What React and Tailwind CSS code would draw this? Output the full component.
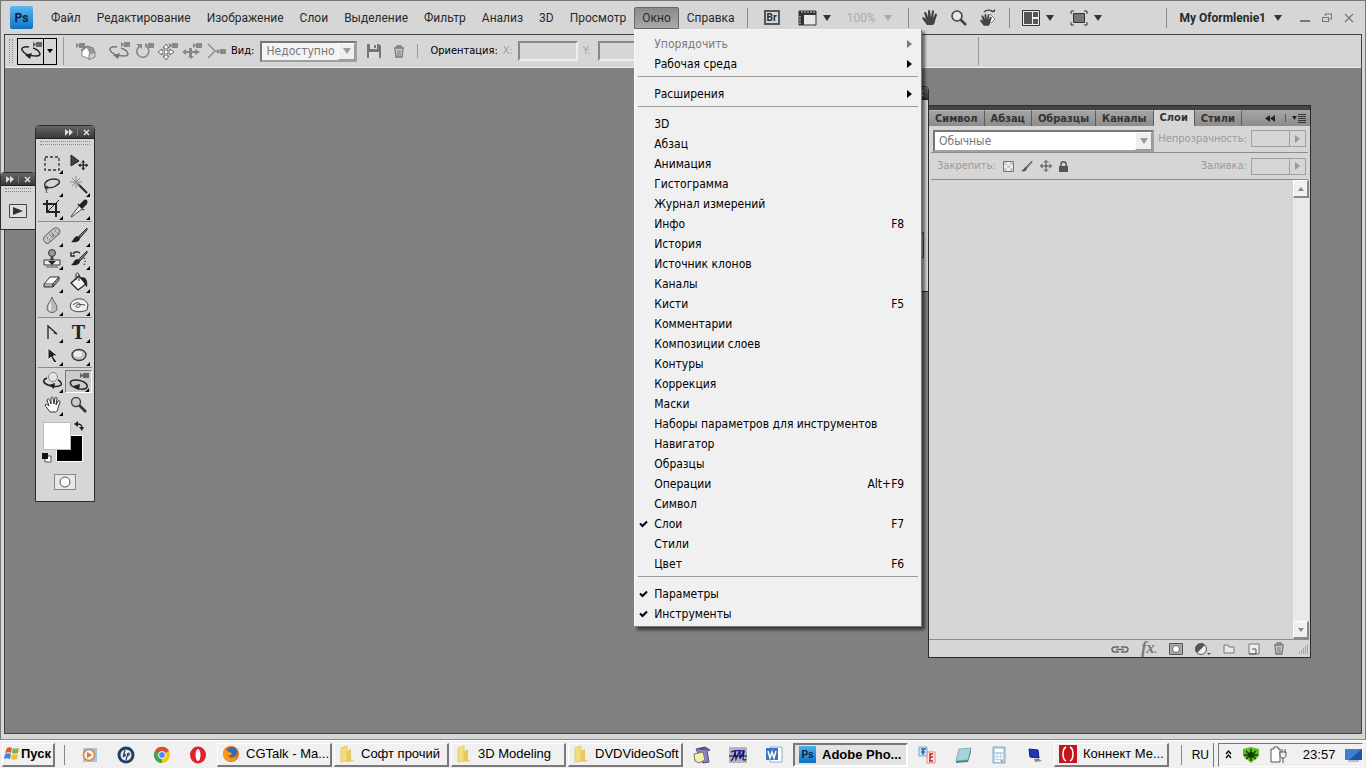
import { useState } from 'react';

const MENUS = ['Файл', 'Редактирование', 'Изображение', 'Слои', 'Выделение', 'Фильтр', 'Анализ', '3D', 'Просмотр', 'Окно', 'Справка'];

const WINDOW_MENU = [
  [
    { label: 'Упорядочить', sub: true, disabled: true },
    { label: 'Рабочая среда', sub: true },
  ],
  [{ label: 'Расширения', sub: true }],
  [
    { label: '3D' },
    { label: 'Абзац' },
    { label: 'Анимация' },
    { label: 'Гистограмма' },
    { label: 'Журнал измерений' },
    { label: 'Инфо', keys: 'F8' },
    { label: 'История' },
    { label: 'Источник клонов' },
    { label: 'Каналы' },
    { label: 'Кисти', keys: 'F5' },
    { label: 'Комментарии' },
    { label: 'Композиции слоев' },
    { label: 'Контуры' },
    { label: 'Коррекция' },
    { label: 'Маски' },
    { label: 'Наборы параметров для инструментов' },
    { label: 'Навигатор' },
    { label: 'Образцы' },
    { label: 'Операции', keys: 'Alt+F9' },
    { label: 'Символ' },
    { label: 'Слои', keys: 'F7' },
    { label: 'Стили' },
    { label: 'Цвет', keys: 'F6' },
  ],
  [{ label: 'Параметры' }, { label: 'Инструменты' }],
];

const PANEL_TABS = ['Символ', 'Абзац', 'Образцы', 'Каналы', 'Слои', 'Стили'];

// --- Small shared pieces ---

const Icon = ({ w = 20, h = 20, children }) => (
  <svg width={w} height={h} viewBox={`0 0 ${w} ${h}`} fill="none" className="shrink-0" aria-hidden="true">
    {children}
  </svg>
);

const Down = ({ color = '#333' }) => (
  <Icon w={8} h={6}><path d="M0 0h8L4 6z" fill={color} /></Icon>
);

const Divider = () => <span className="h-5 w-px bg-[#8c8c8c] shrink-0" />;

const Grip = () => <div className="h-1 mx-1 border-y border-dotted border-[#888]" />;

const Camera = ({ x = 0, y = 0, fill = '#777' }) => (
  <g transform={`translate(${x} ${y})`} fill={fill}>
    <rect x="3" y="0" width="6" height="5" />
    <path d="M0 0l3 2v1L0 5z" />
  </g>
);

const OrbitIcon = ({ color = '#222' }) => (
  <Icon w={22} h={18}>
    <path d="M9 5C4 4 1 6 2 8c2 4 8 6 14 6 4 0 5-2 3-4-1-2-3-3-6-4" stroke={color} strokeWidth="1.5" />
    <path d="M12 11l-2 6-5-4z" fill={color} />
    <Camera x={13} y={0} fill={color === '#222' ? '#666' : '#888'} />
  </Icon>
);

const HandShape = ({ fill, stroke }) => (
  <path
    d="M6 16C4 13 2 11 1 9c1-1 2-1 4 1L3 4c1-2 2-1 3 1l1 3V2c1-2 2-1 2 0l1 6 1-6c1-1 2-1 2 1l-1 6 2-4c1-1 2 0 2 1l-2 6c0 2-1 3-2 4z"
    fill={fill}
    stroke={stroke}
    strokeWidth="1"
  />
);

const Move4 = ({ fill = '#888', stroke = 'none' }) => (
  <path d="M8 0l3 4H9v3h3V5l4 3-4 3V9H9v3h2l-3 4-3-4h2V9H4v2L0 8l4-3v2h3V4H5z" fill={fill} stroke={stroke} />
);

const TrashIcon = () => (
  <Icon w={12} h={13}><path d="M1 3h10M4 3V1h4v2M2 4l1 8h6l1-8" fill="#ccc" stroke="#777" strokeWidth="1.3" /><path d="M5 5v6M7 5v6" stroke="#777" /></Icon>
);

// --- Tool icons ---

const TOOLS = [
  [
    ['Прямоугольная область', <path d="M3 4h14v13H3z" stroke="#333" strokeWidth="1.3" strokeDasharray="3 2" />],
    ['Перемещение', <><path d="M2 2v11l8-5z" fill="#444" stroke="#222" /><g transform="translate(9 7) scale(.65)"><Move4 fill="#222" /></g></>, true],
    ['Лассо', <><path d="M4 12C0 7 6 3 12 3c6 0 7 4 3 6-3 3-8 3-11 2" stroke="#333" strokeWidth="1.4" /><path d="M4 10c-2 1-1 3 1 3s1-3-1-3c0 3 0 5 1 7" stroke="#333" /></>],
    ['Волшебная палочка', <><path d="M9 8l9 9" stroke="#222" strokeWidth="2" /><path d="M7 0v12M1 6h12M3 2l8 8M11 2l-8 8" stroke="#888" /></>],
    ['Рамка', <><path d="M5 1v12h13M1 5h13v13" stroke="#222" strokeWidth="2" /><path d="M17 1L6 12" stroke="#222" /></>],
    ['Пипетка', <><path d="M10 7L3 16l-1 2 2-1 9-7" fill="#eee" stroke="#444" /><path d="M9 5l6 6M11 6l4-4c2-2 4 0 2 3l-4 4z" fill="#222" stroke="#222" strokeWidth="1.5" /></>],
  ],
  [
    ['Восстанавливающая кисть', <><path d="M3 16c-2-2-2-4 0-6l8-7c4-3 9 1 6 5l-9 8c-2 2-4 2-5 0z" fill="#c4c4c4" stroke="#555" /><path d="M7 8l5 5M9 6l5 5" stroke="#888" /><path d="M5 12h1M7 14h1M13 5h1M15 7h1M10 9h1M11 10h1" stroke="#444" /></>],
    ['Кисть', <><path d="M18 2l-8 8 1 2 7-8z" fill="#777" stroke="#333" /><path d="M9 10c-4 0-4 4-7 6 4 1 9 0 9-4z" fill="#222" /></>],
    ['Штамп', <><circle cx="10" cy="4" r="3.5" fill="#999" stroke="#333" /><path d="M9 7h2l1 5H8z" fill="#444" /><path d="M2 11h16v5H2z" fill="#eee" stroke="#333" /><path d="M6 12h8l-4 4z" fill="#222" /><path d="M4 18h12" stroke="#555" /></>],
    ['Архивная кисть', <><path d="M18 2l-8 8 1 2 7-8z" fill="#777" stroke="#333" /><path d="M9 10c-4 0-4 4-7 6 4 1 9 0 9-4z" fill="#222" /><path d="M11 4C8 2 5 3 4 5M2 3v4h4" stroke="#222" strokeWidth="1.4" /><path d="M15 9c2 3 1 6-1 8" stroke="#222" strokeDasharray="1 2" strokeWidth="1.5" /></>],
    ['Ластик', <><path d="M2 12l6-7h9l-6 7z" fill="#f8f8f8" stroke="#333" /><path d="M2 12v3h9v-3M11 15l6-7V5l-6 7z" fill="#aaa" stroke="#333" /></>],
    ['Заливка', <><path d="M2 11l8-7 7 8-8 6z" fill="#f2f2f2" stroke="#222" strokeWidth="1.3" /><path d="M7 8V2c1-2 3-1 3 1v6" stroke="#333" /><path d="M12 5c5 0 7 3 6 10-2-1-2-4-4-6z" fill="#222" /></>],
    ['Размытие', <><path d="M10 2c-1 4-5 7-5 11 0 6 10 6 10 0 0-4-4-7-5-11z" fill="#bbb" stroke="#666" /><path d="M9 7c-3 4-3 8 0 9z" fill="#eee" /></>],
    ['Осветлитель', <><path d="M2 14C0 9 3 5 8 4c6-1 10 2 11 6l-1 5c-4 2-12 3-16-1z" fill="#eee" stroke="#444" /><path d="M4 10c4-4 8-2 7 1-1 2-4 2-4 0 1-2 3-2 9-1" stroke="#444" /></>],
  ],
  [
    ['Перо', <path d="M6 17V4l9 8-3-1" stroke="#222" strokeWidth="1.3" />],
    ['Текст', null],
    ['Выделение контура', <path d="M6 3v12l3-3 3 6 3-1-4-6h5z" fill="#222" stroke="#eee" />],
    ['Эллипс', <><ellipse cx="10" cy="10" rx="7" ry="5.5" fill="#c4c4c4" stroke="#333" strokeWidth="1.3" /><ellipse cx="9" cy="9" rx="4" ry="3" fill="#eee" /></>],
  ],
  [
    ['Поворот 3D-объекта', <><path d="M5 6C0 8 1 11 6 13c5 2 11 2 13 0 1-2-1-4-3-5" stroke="#222" strokeWidth="1.5" /><path d="M13 11l-1 6-5-4z" fill="#222" /><circle cx="11" cy="5" r="4.5" fill="#e4e4e4" stroke="#888" /></>],
    ['Вращение 3D-камеры', <><path d="M7 8C1 8 0 11 3 14c5 4 14 4 15 1 1-3-4-7-11-7" stroke="#222" strokeWidth="1.5" /><path d="M11 12l-1 6-6-4z" fill="#222" /><Camera x={11} y={1} fill="#666" /></>],
    ['Рука', <g transform="translate(2 1)"><HandShape fill="#fff" stroke="#333" /></g>],
    ['Масштаб', <><path d="M10 10l7 7" stroke="#333" strokeWidth="2.6" /><circle cx="7" cy="7" r="4.5" fill="#ccc" stroke="#444" strokeWidth="1.4" /></>, true],
  ],
];

const PanelTitle = () => (
  <div className="h-[13px] px-1 flex items-center justify-end gap-1 bg-linear-to-b from-[#666] to-[#3a3a3a] border-b border-[#222]">
    <Icon w={8} h={7}><path d="M0 0l4 3-4 4zM4 0l4 3-4 4z" fill="#ddd" /></Icon>
    <span className="h-2 w-px bg-[#777]" />
    <button type="button" aria-label="Закрыть" className="ml-px">
      <Icon w={7} h={7}><path d="M1 1l5 5M6 1L1 6" stroke="#ddd" strokeWidth="1.5" /></Icon>
    </button>
  </div>
);

const ToolsPanel = () => (
  <div className="absolute left-[30px] top-[57px] w-[60px] rounded-t-sm overflow-hidden border border-[#2b2b2b] bg-[#d6d6d6]">
    <PanelTitle />
    <div className="pt-0.5"><Grip /></div>
    <div className="pt-1.5 px-0.5">
      {TOOLS.map((group, i) => (
        <div key={i} className="grid grid-cols-2 pb-px mb-0.5 border-b border-[#8c8c8c] last:border-transparent">
          {group.map(([name, art, single]) => (
            <button
              key={name}
              type="button"
              title={name}
              className={`relative h-[23px] flex items-center justify-center ${name === 'Вращение 3D-камеры' ? 'bg-[#cccccc] border border-t-[#777] border-l-[#777] border-r-white border-b-white' : ''}`}
            >
              {art ? <Icon>{art}</Icon> : <span className="font-['Liberation_Serif',serif] font-bold text-xl leading-5 text-[#222]">T</span>}
              {!single && <span className="absolute right-0.5 bottom-0 border-2 border-transparent border-r-black border-b-black" />}
            </button>
          ))}
        </div>
      ))}
    </div>
    {/* foreground / background colours */}
    <div className="relative h-[42px] mx-1.5 mt-[3px]">
      <span className="absolute left-3.5 top-3.5 w-[27px] h-[27px] bg-black border border-white" />
      <span className="absolute left-px top-px w-7 h-7 bg-white border border-[#bbb]" />
      <span className="absolute left-8 top-0">
        <Icon w={10} h={10}><path d="M3 3c4 0 5 1 5 5" stroke="#222" strokeWidth="1.3" /><path d="M0 3l4-3v6zM8 10L5 6h5z" fill="#222" /></Icon>
      </span>
      <span className="absolute left-0 top-8">
        <Icon w={10} h={10}><path d="M3 3h6v6H3z" fill="#fff" stroke="#555" /><path d="M0 0h6v6H0z" fill="#111" /></Icon>
      </span>
    </div>
    <button type="button" title="Быстрая маска" className="mx-auto my-[11px] w-[22px] h-4 flex items-center justify-center bg-[#e8e8e8] border border-[#888]">
      <Icon w={12} h={12}><circle cx="6" cy="6" r="5" stroke="#555" fill="#fff" /></Icon>
    </button>
  </div>
);

const ActionsPanel = () => (
  <div className="absolute -left-[5px] top-[104px] w-9 h-[58px] rounded-t-sm overflow-hidden border border-[#2b2b2b] bg-[#d6d6d6]">
    <PanelTitle />
    <div className="pt-0.5"><Grip /></div>
    <button type="button" title="Воспроизвести" className="mx-auto mt-3 block">
      <Icon w={18} h={14}><path d="M.5.5h17v13H.5z" fill="#ddd" stroke="#444" /><path d="M4 3v8l10-4z" fill="#333" /></Icon>
    </button>
  </div>
);

const PercentField = ({ id, label }) => (
  <div className="ml-auto flex items-center gap-1 text-[11px] leading-4 text-[#9a9a9a]">
    <label htmlFor={id}>{label}</label>
    <div className="flex h-[17px] w-[55px] mr-0.5 border border-[#a0a0a0]">
      <input id={id} disabled className="w-0 flex-1" />
      <span className="w-4 border-l border-[#a0a0a0] flex items-center justify-center">
        <Icon w={5} h={8}><path d="M0 0l5 4-5 4z" fill="#999" /></Icon>
      </span>
    </div>
  </div>
);

const ScrollButton = ({ up }) => (
  <button type="button" aria-label={up ? 'Вверх' : 'Вниз'} className="h-[18px] flex items-center justify-center bg-[#f0f0f0] border border-white border-r-2 border-b-2 border-r-[#888] border-b-[#888]">
    <Icon w={6} h={4}><path d={up ? 'M0 4l3-4 3 4z' : 'M0 0h6L3 4z'} fill="#888" /></Icon>
  </button>
);

const LayersPanel = () => (
  <div className="absolute right-[50px] top-[37px] bottom-[75px] w-[383px] flex flex-col border border-[#2b2b2b] bg-[#d6d6d6]">
    <div className="h-1 bg-[#444]" />
    <div className="h-4 flex bg-linear-to-b from-[#a6a6a6] to-[#8c8c8c] text-[11px] font-bold text-[#333]">
      {PANEL_TABS.map((tab) => (
        <button
          key={tab}
          type="button"
          className={`px-1.5 leading-4 border-r border-[#5c5c5c] ${tab === 'Слои' ? 'bg-[#d6d6d6]' : 'border-t border-t-[#b5b5b5]'}`}
        >
          {tab}
        </button>
      ))}
      <div className="ml-auto pr-1 flex items-center gap-1.5">
        <Icon w={10} h={7}><path d="M5 0L0 3.5l5 3.5zM10 0L5 3.5l5 3.5z" fill="#222" /></Icon>
        <span className="h-2 w-px ml-1 bg-[#555]" />
        <Icon w={14} h={9}><path d="M0 2h5L2.5 6z" fill="#222" /><path d="M6 .5h8M6 2.5h8M6 4.5h8M6 6.5h8M6 8.5h8" stroke="#333" /></Icon>
      </div>
    </div>
    <div className="h-[27px] mx-0.5 pt-1 flex items-start gap-1 border-b border-[#8c8c8c]">
      <div className="relative w-[222px] ml-0.5">
        <select aria-label="Режим наложения" disabled className="block w-full h-[22px] pl-1 appearance-none text-xs text-[#777] bg-white border-2 border-[#a0a0a0] border-t-[#777] border-l-[#777] opacity-100">
          <option>Обычные</option>
        </select>
        <span className="absolute right-0.5 top-0.5 w-[17px] h-[18px] flex items-center justify-center bg-[#efefef] border border-white border-r-[#999] border-b-[#999] pointer-events-none"><Down color="#999" /></span>
      </div>
      <PercentField id="opacity" label="Непрозрачность:" />
    </div>
    <div className="h-[27px] mx-0.5 pl-1.5 flex items-center gap-[7px] border-b border-[#8c8c8c]">
      <span className="text-[11px] text-[#9a9a9a]">Закрепить:</span>
      <Icon w={11} h={11}><path d="M.5.5h10v10H.5z" fill="#eee" stroke="#777" /><path d="M1 1h3v3H1zM7 1h3v3H7zM4 4h3v3H4zM1 7h3v3H1zM7 7h3v3H7z" fill="#ccc" /></Icon>
      <Icon w={12} h={12}><path d="M11 1L5 7l1 1 5-6z" fill="#999" stroke="#666" /><path d="M5 7c-2 0-2 3-5 4 3 1 6 0 6-3z" fill="#555" /></Icon>
      <Icon w={12} h={12}><path d="M6 1v10M1 6h10M4 2.5L6 .5l2 2M4 9.5l2 2 2-2M2.5 4l-2 2 2 2M9.5 4l2 2-2 2" stroke="#444" /></Icon>
      <Icon w={9} h={11}><path d="M2 6V3c0-3 5-3 5 0v3" stroke="#555" strokeWidth="1.5" /><path d="M0 5h9v6H0z" fill="#555" /></Icon>
      <PercentField id="fill" label="Заливка:" />
    </div>
    <div className="flex-1 flex justify-end mr-px border-b border-[#8c8c8c]">
      <div className="w-4 flex flex-col justify-between bg-[#e9e9e9]">
        <ScrollButton up />
        <ScrollButton />
      </div>
    </div>
    <div className="h-[17px] flex items-center justify-end gap-3 pr-px">
      <Icon w={18} h={10}><path d="M8 3H4C0 3 0 8 4 8h4M10 3h4c4 0 4 5 0 5h-4M5 5.5h8" stroke="#666" strokeWidth="1.5" /></Icon>
      <span className="font-['Liberation_Serif',serif] italic font-bold text-base leading-4 text-[#777]">fx<span className="text-[10px]">.</span></span>
      <Icon w={14} h={12}><path d="M.5.5h13v11H.5z" fill="#aaa" stroke="#555" /><circle cx="7" cy="6" r="3.5" fill="#fff" stroke="#666" /></Icon>
      <Icon w={16} h={12}><circle cx="6" cy="6" r="5.5" fill="#eee" stroke="#555" /><path d="M2 10A5.5 5.5 0 0 1 10 2z" fill="#555" /><path d="M12 10h4l-2 2z" fill="#555" /></Icon>
      <Icon w={12} h={10}><path d="M1 1h4l1 2h5v6H1z" fill="#e8e8e8" stroke="#777" /></Icon>
      <Icon w={14} h={12}><path d="M2 1h10v10H2z" fill="#eee" stroke="#777" /><path d="M5 6h4v5H2" stroke="#555" /></Icon>
      <TrashIcon />
      <Icon w={12} h={12}><path d="M10 2h1M8 4h3M6 6h5M4 8h7M2 10h9" stroke="#777" strokeDasharray="1 1" /></Icon>
    </div>
  </div>
);

// --- Window menu ---

const WindowMenu = ({ checked, onToggle }) => (
  <div role="menu" className="absolute left-0 top-full z-20 w-[288px] pt-1 pb-0.5 px-[3px] bg-[#f0f0f0] border border-[#f8f8f8] border-r-[#777] border-b-[#777] shadow-[3px_3px_3px_rgba(0,0,0,0.55)] text-xs font-['DejaVu_Sans_Condensed','DejaVu_Sans',sans-serif]">
    {WINDOW_MENU.map((group, i) => (
      <div key={i}>
        {i > 0 && <div className="h-2.5 pt-0.5"><hr className="border-[#9a9a9a]" /></div>}
        {group.map(({ label, keys, sub, disabled }) => {
          const id = `${i}-${label}`;
          return (
            <button
              key={id}
              type="button"
              role="menuitem"
              disabled={disabled}
              onClick={() => onToggle(id)}
              className={`w-full h-5 flex items-center text-left ${disabled ? 'text-[#7a7a7a]' : 'text-black hover:bg-[#d0d0d0]'}`}
            >
              <span className="w-4 pl-px">
                {checked.includes(id) && <Icon w={9} h={8}><path d="M1 3.5L3.5 6 8 1.5" stroke="#000" strokeWidth="2" /></Icon>}
              </span>
              <span className="flex-1">{label}</span>
              {keys && <span className="pr-3.5">{keys}</span>}
              {sub && <span className="pr-1.5"><Icon w={5} h={8}><path d="M0 0l5 4-5 4z" fill="currentColor" /></Icon></span>}
            </button>
          );
        })}
      </div>
    ))}
  </div>
);

const MenuBar = () => {
  const [open, setOpen] = useState('Окно');
  const [checked, setChecked] = useState(['2-Слои', '3-Параметры', '3-Инструменты']);

  const toggle = (id) => {
    setChecked(checked.includes(id) ? checked.filter((c) => c !== id) : [...checked, id]);
  };

  return (
    <header className="h-[33px] pl-1.5 pr-2 flex items-center text-xs text-[#2a2a2a] font-[Roboto,'Noto_Sans',sans-serif]">
      <span className="w-[23px] h-[23px] mr-2.5 flex items-center justify-center bg-linear-to-b from-[#5bb8ef] to-[#0a72c4] font-bold text-[#06243f] rounded-xs">Ps</span>
      {MENUS.map((m) => (
        <div key={m} className="relative">
          <button
            type="button"
            onClick={() => setOpen(open === m ? '' : m)}
            className={`h-[22px] px-[7px] border ${open === m ? 'bg-linear-to-b from-[#8a8a8a] to-[#aaa] border-[#666] rounded-t-xs' : 'border-transparent'}`}
          >
            {m}
          </button>
          {m === 'Окно' && open === m && <WindowMenu checked={checked} onToggle={toggle} />}
        </div>
      ))}
      <div className="ml-1 flex items-center gap-4">
        <Divider />
        <span className="w-4 h-[15px] flex items-center justify-center border-2 border-[#555] text-[10px] leading-3 font-bold">Br</span>
        <span className="ml-0.5 flex items-center gap-1.5">
          <Icon w={19} h={16}><path d="M1 1h17v14H1z" fill="#e8e8e8" stroke="#333" /><path d="M1 1h17v4H6v10H1z" fill="#333" /><path d="M4 1v2M7 1v2M10 1v2M13 1v2M16 1v2M1 7h2M1 10h2M1 13h2" stroke="#ccc" /></Icon>
          <Down />
        </span>
        <span className="flex items-center gap-2 text-[#aaa]">100%<Down color="#aaa" /></span>
        <Divider />
      </div>
      <div className="ml-3 flex items-center gap-3">
        <Icon w={17} h={18}><HandShape fill="#444" /></Icon>
        <Icon w={17} h={18}><path d="M10 10l6 6" stroke="#444" strokeWidth="2.5" /><circle cx="7" cy="7" r="5" fill="#e8e8e8" stroke="#444" strokeWidth="1.6" /></Icon>
        <Icon w={18} h={18}><path d="M11 5l5 5-4 4" fill="#fff" stroke="#777" /><g transform="translate(0 4) scale(.8)"><HandShape fill="#444" /></g><path d="M5 3c3-3 7-2 9 0" stroke="#444" strokeWidth="1.2" /><path d="M12 3h4V0z" fill="#444" /></Icon>
        <Divider />
        <span className="flex items-center gap-1.5">
          <Icon w={18} h={16}><path d="M.5.5h17v15H.5z" fill="#eee" stroke="#333" /><path d="M2 2h8v12H2zM11 2h5v5h-5zM11 9h5v5h-5z" fill="#555" /></Icon>
          <Down />
        </span>
        <span className="flex items-center gap-1.5 ml-1">
          <Icon w={18} h={16}><path d="M1 4V1h3M14 1h3v3M17 12v3h-3M4 15H1v-3" stroke="#333" /><path d="M3.5 3.5h11v9h-11z" fill="#777" stroke="#333" /></Icon>
          <Down />
        </span>
      </div>
      <div className="ml-auto flex items-center gap-3">
        <Divider />
        <button type="button" className="flex items-center gap-2 font-bold">My Oformlenie1<Down /></button>
        <button type="button" aria-label="Свернуть" className="ml-1.5"><Icon w={10} h={10}><path d="M0 8h10" stroke="#777" strokeWidth="2" /></Icon></button>
        <button type="button" aria-label="Восстановить"><Icon w={10} h={10}><path d="M3.5 3V1h6v5h-2M.5 4.5h6v4h-6z" stroke="#777" strokeWidth="1.2" /></Icon></button>
        <button type="button" aria-label="Закрыть"><Icon w={10} h={10}><path d="M1 1l8 8M9 1L1 9" stroke="#777" strokeWidth="1.2" /></Icon></button>
      </div>
    </header>
  );
};

const OptionsBar = () => (
  <div className="h-[33px] pl-1 flex items-center bg-[#d6d6d6] border-b border-[#eee] text-[11px] text-black">
    <span className="w-1 h-6 border-x border-dotted border-[#888]" />
    <button type="button" title="Вращение 3D-камеры" className="ml-1 w-10 h-[27px] flex items-center border border-black">
      <span className="w-[26px] h-full flex items-center justify-center border-r border-black"><OrbitIcon /></span>
      <span className="flex-1 flex justify-center"><Icon w={6} h={4}><path d="M0 0h6L3 4z" fill="#000" /></Icon></span>
    </button>
    <span className="ml-1.5 mr-3 h-7 w-px bg-[#999]" />
    <div className="flex items-center gap-1">
      <span className="mr-2"><Icon w={20} h={20}><Camera x={0} y={2} fill="#888" /><path d="M5 9l6-4 6 2 2 5-7 2z" fill="#999" stroke="#777" /><path d="M6 10l5-4 3 6v6l-8-3z" fill="#fff" stroke="#888" /><path d="M13 13l6-2v5l-6 3z" fill="#ccc" stroke="#888" /></Icon></span>
      <OrbitIcon color="#777" />
      <Icon w={20} h={18}><path d="M6 4a6 6 0 1 0 7 1" stroke="#888" strokeWidth="1.6" /><path d="M2 2h6v5z" fill="#888" /><Camera x={11} y={1} fill="#888" /></Icon>
      <Icon w={20} h={18}><g transform="translate(0 2)"><Move4 fill="#fff" stroke="#666" /></g><Camera x={11} y={1} fill="#888" /></Icon>
      <Icon w={20} h={18}><path d="M0 10l4-3v2h3V6h3v3h3V7l5 3-5 3v-2h-3v3h2l-3 3-3-3h1v-3H4v2z" fill="#888" /><Camera x={11} y={1} fill="#888" /></Icon>
      <Icon w={20} h={18}><path d="M2 2l7 7-7 7M9 9h3" stroke="#888" strokeWidth="1.3" /><Camera x={11} y={7} fill="#888" /></Icon>
    </div>
    <label htmlFor="view" className="ml-[5px]">Вид:</label>
    <div className="relative ml-1.5 w-[97px]">
      <select id="view" disabled className="block w-full h-[21px] pl-1 appearance-none text-xs text-[#777] bg-[#f4f4f4] border-2 border-[#a0a0a0] border-t-[#777] border-l-[#777] opacity-100">
        <option>Недоступно</option>
      </select>
      <span className="absolute right-0.5 top-0.5 w-[17px] h-[17px] flex items-center justify-center bg-[#efefef] border border-white border-r-[#999] border-b-[#999] pointer-events-none"><Down color="#999" /></span>
    </div>
    <div className="ml-2.5 flex items-center gap-3">
      <Icon w={14} h={14}><path d="M0 0h12l2 2v12H0z" fill="#777" /><path d="M3 0h7v5H3zM2 8h10v6H2z" fill="#ddd" /><path d="M7 1h2v3H7z" fill="#777" /></Icon>
      <TrashIcon />
    </div>
    <span className="mx-3 h-3.5 w-px bg-[#999]" />
    <span>Ориентация:</span>
    {['X', 'Y'].map((axis) => (
      <span key={axis} className="flex items-center">
        <label htmlFor={`axis-${axis}`} className="w-5 pl-[5px] text-[#a0a0a0]">{axis}:</label>
        <input id={`axis-${axis}`} disabled className="w-[60px] h-5 border-2 border-[#eee] border-t-[#888] border-l-[#888]" />
      </span>
    ))}
    <span className="ml-80 h-7 w-px bg-[#999]" />
  </div>
);

// --- Taskbar ---

const Folder = () => (
  <Icon w={16} h={18}><path d="M2 3l6-2v15l-6 1z" fill="#f3dc7d" stroke="#e3cb6c" /><path d="M8 6l4-2v10l3 2-7 1z" fill="#e8c95c" /></Icon>
);

const TASKS = [
  { name: 'Проигрыватель', icon: <><path d="M2 2h14v14H2z" fill="#9cc7e6" /><circle cx="8" cy="9" r="5.5" fill="#f6f1e8" stroke="#d08a3e" strokeWidth="1.5" /><path d="M6 6v6l5-3z" fill="#e8761c" /></> },
  { name: 'HP', icon: <><circle cx="9" cy="9" r="8.5" fill="#21405e" /><circle cx="9" cy="9" r="5.5" fill="#e9eef3" /><path d="M8 4l-2 7M6.5 9c2-2 2 0 1 2M11 7l-2 7M11 7c2 0 2 3-1 3" stroke="#21405e" strokeWidth="1.2" /></> },
  { name: 'Chrome', icon: <><circle cx="9" cy="9" r="8" fill="#f2c91d" /><path d="M9 9L2 5a8 8 0 0 1 14 0z" fill="#dd4b39" /><path d="M9 9v8A8 8 0 0 1 2 5z" fill="#3aa757" /><circle cx="9" cy="9" r="3.5" fill="#4a8af4" stroke="#fff" /></> },
  { name: 'Opera', icon: <><ellipse cx="9" cy="9" rx="8" ry="8.5" fill="#e0222c" /><ellipse cx="9" cy="9" rx="2.5" ry="6" fill="#fff" /></> },
  { label: 'CGTalk - Ma...', icon: <><circle cx="9" cy="9" r="8" fill="#e8681a" /><circle cx="10" cy="7" r="5" fill="#2d6fb5" /><path d="M2 5c3 0 4 2 8 3-1 3-3 3-5 2 2 5 8 4 10 0 0 8-12 9-14 0z" fill="#f39a1f" /></> },
  { label: 'Софт прочий', folder: true },
  { label: '3D Modeling', folder: true },
  { label: 'DVDVideoSoft', folder: true },
  { name: 'Стикеры', icon: <><path d="M3 3l9-2 5 3-3 1 2 11-6 1z" fill="#8a84c4" stroke="#4a4584" /><path d="M1 8l9-2 2 8-6 3-4-2z" fill="#f4f0a6" stroke="#777" /><path d="M6 3h8" stroke="#333" /></> },
  { name: 'Maxthon', icon: <><path d="M0 1h18v16H0z" fill="#b5b5b5" /><path d="M2 15C5 12 6 8 6 4l1 9 4-9v9l4-9-1 9c1 2 2 1 3 0M2 6c5-2 9-2 14 0" stroke="#15159a" strokeWidth="1.3" /><path d="M0 10h18" stroke="#111" /></> },
  { name: 'Word', icon: <><path d="M5 1h12v15H5z" fill="#fff" stroke="#8aa8d0" /><path d="M1 2h12v12H1z" fill="#3b74c0" /><path d="M3 5l2 7 2-6 2 6 2-7" stroke="#fff" strokeWidth="1.5" /></> },
  { label: 'Adobe Pho...', active: true },
  { name: 'FineReader', icon: <><path d="M1 1h8v9H1z" fill="#cfe3f5" stroke="#7fa8cf" /><path d="M3 3h5M5 3v6M3 6h4" stroke="#2a63a8" strokeWidth="1.5" /><path d="M9 6h8v11H9z" fill="#fbeaea" stroke="#d88" /><path d="M11 8h4M12 8v7M12 11h3M11 15h4" stroke="#c22" strokeWidth="1.5" /></> },
  { name: 'Блокнот', icon: <><path d="M5 3l12-1-3 12-12 1z" fill="#a5d3dc" stroke="#7fb2be" /><path d="M2 15l12-1 3-12v4l-3 10-12 1z" fill="#557f8c" /></> },
  { name: 'Калькулятор', icon: <><path d="M3 1h12v16H3z" fill="#b9d6ea" stroke="#86acc8" /><path d="M5 3h8v3H5z" fill="#fff" /><path d="M5 9h2M8 9h2M11 9h2M5 12h2M8 12h2M11 12h2M5 15h2M8 15h2" stroke="#fff" strokeWidth="2" /><path d="M11 15h2" stroke="#e9a03c" strokeWidth="2" /></> },
  { name: 'Подключение', icon: <><path d="M3 3l9 1 1 8-9-1z" fill="#1c37b8" stroke="#0f2270" /><path d="M8 13l5 0 3 2-7 1z" fill="#889" /></> },
  { label: 'Коннект Ме...', icon: <><path d="M0 0h18v18H0z" fill="#c4161c" /><path d="M7 2C3 4 3 14 7 16M11 2c4 2 4 12 0 14" stroke="#fff" strokeWidth="1.5" /></> },
];

const raised = 'border border-white border-r-2 border-b-2 border-r-[#7a7a7a] border-b-[#7a7a7a]';

const Taskbar = () => (
  <footer className="h-7 pl-0.5 pr-[3px] flex items-center bg-[#f0f0f0] border-t border-white text-[13px] text-black font-['Liberation_Sans',Arial,sans-serif]">
    <button type="button" className={`w-[53px] h-6 px-px flex items-center gap-px font-bold ${raised}`}>
      <Icon w={16} h={16}><path d="M3 2c2-1 3-1 5 0L7 7C5 6 4 6 1 7z" fill="#e2592a" /><path d="M9 2c2 1 4 1 6 0l-1 5c-2 1-4 1-6 0z" fill="#7ab648" /><path d="M1 8c2-1 4-1 6 0l-1 5c-2-1-4-1-6 0z" fill="#3f87d3" /><path d="M8 8c2 1 4 1 6 0l-1 5c-2 1-4 1-6 0z" fill="#f4bf2c" /></Icon>
      Пуск
    </button>
    <span className="ml-2 mr-[7px] h-5 w-0.5 border-r border-[#888]" />
    {TASKS.map(({ name, label, icon, folder, active }) =>
      label ? (
        <div key={label} className="w-[117px] h-6 pl-px pr-px">
          <button
            type="button"
            className={`w-full h-full pl-1 flex items-center gap-1.5 whitespace-nowrap ${active ? 'bg-[#e2e2e2] font-bold border-2 border-white border-t-[#777] border-l-[#777]' : raised}`}
          >
            {active && <span className="w-[17px] h-[17px] flex items-center justify-center bg-linear-to-b from-[#4fb0ec] to-[#0a72c4] text-[10px] leading-3 text-[#06243f]">Ps</span>}
            {folder && <Folder />}
            {icon && <Icon w={18} h={18}>{icon}</Icon>}
            <span>{label}</span>
          </button>
        </div>
      ) : (
        <button key={name} type="button" title={name} className="w-9 h-6 flex items-center justify-center">
          <Icon w={18} h={18}>{icon}</Icon>
        </button>
      )
    )}
    <span className="ml-auto h-5 w-0.5 border-r border-[#888]" />
    <span className="pl-2.5 pr-1 text-xs">RU</span>
    <div className="h-6 w-[150px] pl-1 border-l border-[#777]">
      <div className="h-full pl-1.5 flex items-center justify-between border border-white border-t-[#777] border-l-[#777]">
        <Icon w={7} h={9}><path d="M1 4l2.5-3L6 4M1 8l2.5-3L6 8" stroke="#000" strokeWidth="1.3" /></Icon>
        <Icon w={18} h={18}><path d="M1 3l8-2 8 2v7l-8 7-8-7z" fill="#5fbf22" /><path d="M9 3v12M4 5l3 3M14 5l-3 3M2 9h14M4 13l3-3M14 13l-3-3" stroke="#143a06" strokeWidth="1.4" /><circle cx="9" cy="9" r="3" fill="#143a06" /></Icon>
        <Icon w={18} h={18}><path d="M2 3h3V1h4v2h2v13H2z" fill="#fff" stroke="#555" /><path d="M11 6h6v3c0 2-1 3-3 3s-3-1-3-3zM13 3v3M16 3v3M14 12v5" stroke="#555" fill="#eee" /></Icon>
        <span className="pl-1.5">23:57</span>
        <Icon w={17} h={14}><path d="M0 1h17v11H0z" fill="#3d7ed0" /><path d="M17 1v11L4 12z" fill="#1f55a8" /><path d="M3 13h11" stroke="#888" /></Icon>
      </div>
    </div>
  </footer>
);

const App = () => (
  <div className="min-h-screen flex flex-col bg-[#f0f0f0] font-['DejaVu_Sans_Condensed','DejaVu_Sans',sans-serif]">
    <div className="flex-1 flex flex-col px-[3px] bg-[#d6d6d6] border-t border-x border-[#777] pb-[5px]">
      <MenuBar />
      <main className="flex-1 flex flex-col border border-[#444]">
        <OptionsBar />
        <section className="relative flex-1 bg-[#808080]">
          <ActionsPanel />
          <ToolsPanel />
          {/* panel group mostly hidden by the open menu */}
          <div className="absolute right-[432px] top-[18px] w-[60px] h-[206px] rounded-t-sm overflow-hidden border border-[#2b2b2b] bg-[#d6d6d6]">
            <PanelTitle />
            <div className="mt-[132px] ml-auto mr-1 w-4 h-[26px] border border-[#555] bg-[#bbb]" />
          </div>
          <LayersPanel />
        </section>
      </main>
    </div>
    <div className="h-px bg-[#888]" />
    <Taskbar />
  </div>
);

export default App;
